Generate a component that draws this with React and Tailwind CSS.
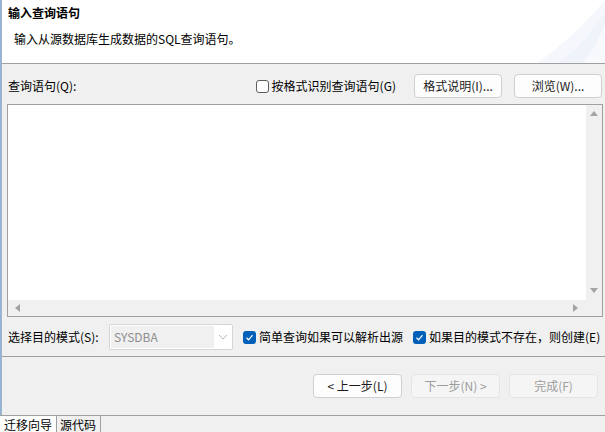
import React from 'react'

function Check({ checked }) {
    if (checked) {
        return (
            <span className="w-[13px] h-[13px] rounded-[3px] bg-[#005fb8] flex items-center justify-center shrink-0">
                <svg width="9" height="9" viewBox="0 0 9 9">
                    <path d="M1.5 4.8 L3.6 6.8 L7.5 2.2" fill="none" stroke="white" strokeWidth="1.2" />
                </svg>
            </span>
        )
    }
    return <span className="w-[13px] h-[13px] rounded-[3px] border border-[#5d5d5d] bg-white shrink-0" />
}

function Btn({ children, disabled, w }) {
    const size = w === 'sm' ? 'w-[88px] ' : 'w-[89px] '
    return (
        <div
            className={
                size +
                (disabled
                    ? 'h-[24px] rounded-[4px] border border-[#e5e5e5] bg-[#f5f5f5] text-[#9d9d9d] flex items-center justify-center'
                    : 'h-[24px] rounded-[4px] border border-[#d0d0d0] bg-[#fdfdfd] text-[#1a1a1a] flex items-center justify-center')
            }
        >
            {children}
        </div>
    )
}

function Tri({ dir }) {
    const d = {
        up: 'M0 6 L4 1 L8 6 Z',
        down: 'M0 1 L4 6 L8 1 Z',
        left: 'M6 0 L1 4 L6 8 Z',
        right: 'M1 0 L6 4 L1 8 Z',
    }[dir]
    return (
        <svg width="8" height="8" viewBox="0 0 8 8">
            <path d={d} fill="#a3a3a3" />
        </svg>
    )
}

export default function App() {
    return (
        <div
            className="w-[605px] h-[432px] flex flex-col bg-[#f0f0f0] text-[12px] leading-[16px] text-black overflow-hidden"
            style={{ fontFamily: '"Noto Sans CJK SC", "Noto Sans", sans-serif' }}
        >
            <div className="flex-1 flex flex-col border-l-2 border-[#99b4d1]">
                <div className="relative h-[64px] bg-white border-b border-[#a0a0a0] shrink-0 overflow-hidden">
                    <svg className="absolute right-0 top-0" width="80" height="63" viewBox="0 0 80 63">
                        <path d="M80 0 C62 22 38 45 12 63 L80 63 Z" fill="#f5f7fc" />
                        <path d="M80 12 C68 32 52 50 34 63 L80 63 Z" fill="#eff3fa" />
                        <path d="M80 24 C74 40 66 52 58 63 L80 63 Z" fill="#f7f9fd" />
                    </svg>
                    <p className="absolute left-[6px] top-[5px] font-bold">输入查询语句</p>
                    <p className="absolute left-[12px] top-[31px]">输入从源数据库生成数据的SQL查询语句。</p>
                </div>

                <div className="flex-1 flex flex-col pl-[5px] pr-[2px]">
                    <div className="mt-[10px] h-[24px] flex items-center">
                        <span className="pl-[1px] flex-1">查询语句(Q):</span>
                        <div className="flex items-center gap-[3px]">
                            <Check />
                            <span>按格式识别查询语句(G)</span>
                        </div>
                        <div className="ml-[18px] flex gap-[12px] pr-[1px]">
                            <Btn w="sm">格式说明(I)...</Btn>
                            <Btn w="sm">浏览(W)...</Btn>
                        </div>
                    </div>

                    <div className="mt-[6px] h-[213px] border border-[#a0a0a0] bg-white grid grid-cols-[1fr_16px] grid-rows-[1fr_16px]">
                        <div className="bg-white" />
                        <div className="bg-[#f0f0f0] flex flex-col items-center justify-between py-[5px]">
                            <Tri dir="up" />
                            <Tri dir="down" />
                        </div>
                        <div className="bg-[#f0f0f0] flex items-center justify-between px-[6px]">
                            <Tri dir="left" />
                            <Tri dir="right" />
                        </div>
                        <div className="bg-[#f0f0f0]" />
                    </div>

                    <div className="mt-[7px] h-[26px] flex items-center">
                        <span className="pl-[1px] w-[102px]">选择目的模式(S):</span>
                        <div className="w-[124px] h-[26px] border border-[#d5d5d5] rounded-[2px] bg-white flex items-center p-[1px]">
                            <div className="w-[103px] h-full bg-[#f0f0f0] text-[#8d8d8d] flex items-center pl-[3px]">SYSDBA</div>
                            <div className="flex-1 flex items-center justify-center">
                                <svg width="10" height="6" viewBox="0 0 10 6">
                                    <path d="M1 1 L5 5 L9 1" fill="none" stroke="#b5b5b5" strokeWidth="1" />
                                </svg>
                            </div>
                        </div>
                        <div className="ml-[10px] flex items-center gap-[3px]">
                            <Check checked />
                            <span>简单查询如果可以解析出源</span>
                        </div>
                        <div className="ml-[10px] flex items-center gap-[3px]">
                            <Check checked />
                            <span>如果目的模式不存在，则创建(E)</span>
                        </div>
                    </div>

                    <div className="mt-[6px] -ml-[5px] -mr-[2px] border-t border-[#a0a0a0]" />

                    <div className="mt-[17px] flex justify-end gap-[9px] pr-[5px]">
                        <Btn>{'< 上一步(L)'}</Btn>
                        <Btn disabled>{'下一步(N) >'}</Btn>
                        <Btn disabled>完成(F)</Btn>
                    </div>
                </div>
            </div>

            <div className="h-[17px] shrink-0 border-t border-[#a0a0a0] flex text-[12px] leading-[15px]">
                <div className="w-[57px] bg-white border-r border-[#a0a0a0] pl-[4px] pt-[1px]">迁移向导</div>
                <div className="w-[44px] border-r border-[#a0a0a0] pl-[3px] pt-[1px]">源代码</div>
            </div>
        </div>
    )
}
